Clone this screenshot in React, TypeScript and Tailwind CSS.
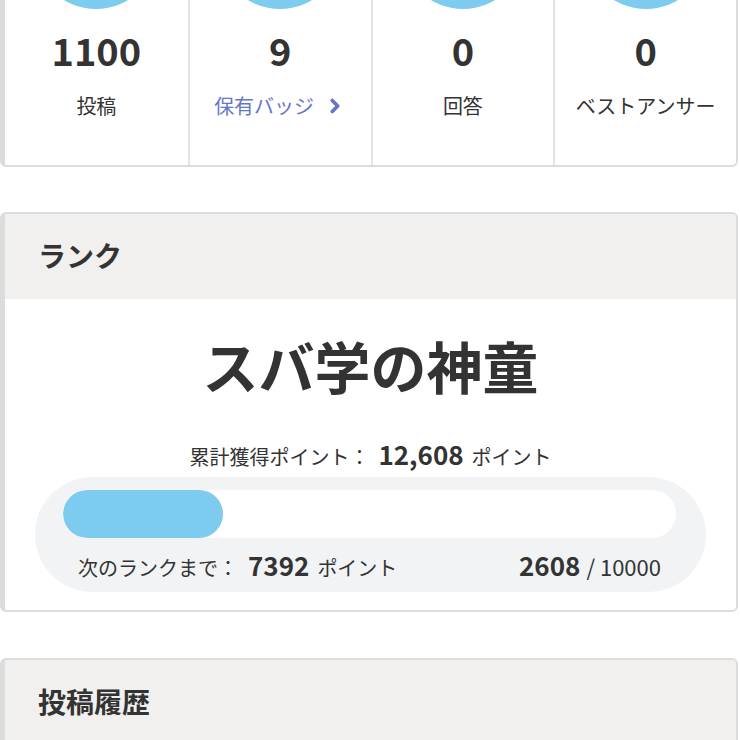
import { ChevronRight } from 'lucide-react';

const stats = [
  { value: '1100', label: '投稿' },
  { value: '9', label: '保有バッジ', link: true },
  { value: '0', label: '回答' },
  { value: '0', label: 'ベストアンサー' },
];

const Card = ({ children, className = '' }: { children: React.ReactNode; className?: string }) => (
  <div
    className={`bg-white border-2 border-l-[5px] border-[#dcdcdc] rounded-md overflow-hidden ${className}`}
  >
    {children}
  </div>
);

export default function App() {
  const current = 2608;
  const max = 10000;
  const percent = (current / max) * 100;

  return (
    <div
      className="w-[740px] h-[740px] overflow-hidden bg-white text-[#333]"
      style={{ fontFamily: '"Noto Sans CJK JP", "Noto Sans", sans-serif' }}
    >
      <div className="w-[738px] -mt-[137px]">
        {/* 統計 */}
        <Card>
          <div className="grid grid-cols-4">
            {stats.map((s, i) => (
              <div
                key={i}
                className={`flex flex-col items-center pt-[20px] pb-[45px] ${
                  i > 0 ? 'border-l-2 border-[#e4e4e4]' : ''
                }`}
              >
                <div className="w-[124px] h-[124px] rounded-full bg-[#7dcbee]" />
                <div className="mt-[19px] text-[38px] leading-[44px] font-bold">{s.value}</div>
                {s.link ? (
                  <div className="mt-[20px] flex items-center gap-[10px] text-[20px] leading-[28px] text-[#6476c4]">
                    <span>{s.label}</span>
                    <ChevronRight size={22} strokeWidth={4} />
                  </div>
                ) : (
                  <div className="mt-[20px] text-[20px] leading-[28px]">{s.label}</div>
                )}
              </div>
            ))}
          </div>
        </Card>

        {/* ランク */}
        <Card className="mt-[45px]">
          <div className="h-[85px] bg-[#f1f0ef] flex items-center pl-[33px] pb-[4px]">
            <h3 className="text-[28px] font-bold">ランク</h3>
          </div>
          <div className="pt-[26px] pb-[18px]">
            <div className="text-center text-[56px] leading-[80px] font-bold">スバ学の神童</div>
            <div className="mt-[33px] flex items-baseline justify-center text-[20px] leading-[32px]">
              <span className="mr-[9px]">累計獲得ポイント：</span>
              <span className="text-[26px] font-bold mr-2">12,608</span>
              <span>ポイント</span>
            </div>
            <div className="mt-[4px] mx-[30px] bg-[#f1f3f5] rounded-full pl-[28px] pr-[30px] pt-[13px] pb-[8px]">
              <div className="h-[48px] bg-white rounded-full overflow-hidden">
                <div className="h-full bg-[#7dcbee] rounded-full" style={{ width: `${percent}%` }} />
              </div>
              <div className="mt-[11px] px-[15px] flex items-baseline justify-between leading-[32px]">
                <div className="flex items-baseline text-[20px]">
                  <span className="mr-[10px]">次のランクまで：</span>
                  <span className="text-[26px] font-bold mr-2">7392</span>
                  <span>ポイント</span>
                </div>
                <div className="flex items-baseline">
                  <span className="text-[26px] font-bold">{current}</span>
                  <span className="text-[22px] ml-1.5">/ {max}</span>
                </div>
              </div>
            </div>
          </div>
        </Card>

        {/* 投稿履歴 */}
        <Card className="mt-[46px]">
          <div className="h-[85px] bg-[#f1f0ef] flex items-center pl-[33px] pb-[4px]">
            <h3 className="text-[28px] font-bold">投稿履歴</h3>
          </div>
          <div className="h-[200px]" />
        </Card>
      </div>
    </div>
  );
}
